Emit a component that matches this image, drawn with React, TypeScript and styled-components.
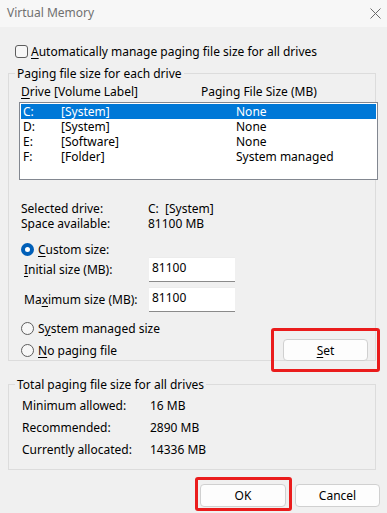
import React from 'react'
import styled, { createGlobalStyle } from 'styled-components'

const GlobalStyle = createGlobalStyle`
  html, body {
    margin: 0;
    padding: 0;
    background: #f0f0f0;
  }
  body {
    font-family: "Segoe UI", "Noto Sans", sans-serif;
    font-size: 12px;
    color: #000;
  }
`

const drives = [
  { letter: 'C:', label: '[System]', size: 'None' },
  { letter: 'D:', label: '[System]', size: 'None' },
  { letter: 'E:', label: '[Software]', size: 'None' },
  { letter: 'F:', label: '[Folder]', size: 'System managed' },
]

const totals = [
  { label: 'Minimum allowed:', value: '16 MB' },
  { label: 'Recommended:', value: '2890 MB' },
  { label: 'Currently allocated:', value: '14336 MB' },
]

const App: React.FC = () => {
  return (
    <>
      <GlobalStyle />
      <Window>
        <TitleBar>
          <span>Virtual Memory</span>
          <CloseIcon width="11" height="11" viewBox="0 0 11 11">
            <path d="M0.5 0.5 L10.5 10.5 M10.5 0.5 L0.5 10.5" stroke="#6b6b6b" strokeWidth="1" fill="none" />
          </CloseIcon>
        </TitleBar>

        <Body>
          <CheckRow>
            <CheckBox />
            <span>
              <Key>A</Key>utomatically manage paging file size for all drives
            </span>
          </CheckRow>

          <Group $gap={7}>
            <Legend>Paging file size for each drive</Legend>
            <ListHeader>
              <span>
                <Key>D</Key>rive
              </span>
              <span>[Volume Label]</span>
              <span>Paging File Size (MB)</span>
            </ListHeader>
            <ListBox>
              {drives.map((d, i) => (
                <DriveRow key={d.letter} $selected={i === 0}>
                  <span>{d.letter}</span>
                  <span>{d.label}</span>
                  <span>{d.size}</span>
                </DriveRow>
              ))}
            </ListBox>

            <InfoBlock>
              <InfoRow>
                <span>Selected drive:</span>
                <span>C:&nbsp;&nbsp;[System]</span>
              </InfoRow>
              <InfoRow>
                <span>Space available:</span>
                <span>81100 MB</span>
              </InfoRow>
            </InfoBlock>

            <RadioRow $top={11}>
              <Radio $checked />
              <span>
                <Key>C</Key>ustom size:
              </span>
            </RadioRow>
            <SizeRow $top={0}>
              <span>
                <Key>I</Key>nitial size (MB):
              </span>
              <SizeInput defaultValue="81100" />
            </SizeRow>
            <SizeRow $top={5}>
              <span>
                Ma<Key>x</Key>imum size (MB):
              </span>
              <SizeInput defaultValue="81100" />
            </SizeRow>

            <BottomArea>
              <div>
                <RadioRow $top={0}>
                  <Radio />
                  <span>
                    S<Key>y</Key>stem managed size
                  </span>
                </RadioRow>
                <RadioRow $top={7}>
                  <Radio />
                  <span>
                    <Key>N</Key>o paging file
                  </span>
                </RadioRow>
              </div>
              <SetButton>
                <Key>S</Key>et
              </SetButton>
            </BottomArea>
          </Group>

          <Group $gap={16.5}>
            <Legend>Total paging file size for all drives</Legend>
            <TotalsList>
              {totals.map((t) => (
                <TotalRow key={t.label}>
                  <span>{t.label}</span>
                  <span>{t.value}</span>
                </TotalRow>
              ))}
            </TotalsList>
          </Group>

          <Footer>
            <OkButton>OK</OkButton>
            <DialogButton>Cancel</DialogButton>
          </Footer>
        </Body>
      </Window>
    </>
  )
}

const Window = styled.div`
  width: 387px;
  height: 513px;
  background: #f0f0f0;
  display: flex;
  flex-direction: column;
  overflow: hidden;
`

const TitleBar = styled.div`
  height: 27px;
  flex: none;
  box-sizing: border-box;
  padding: 0 6px 2px 7px;
  background: #f7f7f7;
  color: #707070;
  display: flex;
  align-items: center;
  justify-content: space-between;
`

const CloseIcon = styled.svg`
  display: block;
  margin-top: 2px;
`

const Body = styled.div`
  padding: 0 7px 0 8px;
  display: flex;
  flex-direction: column;
`

const Key = styled.span`
  text-decoration: underline;
  text-underline-offset: 2px;
`

const CheckRow = styled.div`
  margin-top: 16.5px;
  margin-left: 7px;
  height: 15px;
  line-height: 15px;
  display: flex;
  align-items: center;
  gap: 3px;
`

const CheckBox = styled.span`
  width: 13px;
  height: 13px;
  box-sizing: border-box;
  border: 1px solid #5d5d5d;
  border-radius: 3px;
  background: #f7f7f7;
`

const Group = styled.fieldset<{ $gap: number }>`
  margin: ${(p) => p.$gap}px 4px 0 0;
  padding: 0;
  min-inline-size: 0;
  border: 1px solid #dcdcdc;
  display: flex;
  flex-direction: column;
`

const Legend = styled.legend`
  margin-left: 6px;
  padding: 0 2px;
  line-height: 15px;
  height: 15px;
`

const ListHeader = styled.div`
  margin: 3px 0 0 12px;
  height: 15px;
  line-height: 15px;
  display: grid;
  grid-template-columns: 33px 147px 1fr;
`

const ListBox = styled.div`
  margin: 3.5px -3px 0 10px;
  height: 78px;
  box-sizing: border-box;
  border: 1px solid #828790;
  background: #fff;
  padding: 1px;
`

const DriveRow = styled.div<{ $selected?: boolean }>`
  height: 15px;
  line-height: 15px;
  padding-left: 2px;
  display: grid;
  grid-template-columns: 38px 175px 1fr;
  background: ${(p) => (p.$selected ? '#0078d7' : 'transparent')};
  color: ${(p) => (p.$selected ? '#fff' : '#000')};
`

const InfoBlock = styled.div`
  margin: 20.5px 0 0 12px;
`

const InfoRow = styled.div`
  height: 15px;
  line-height: 15px;
  display: grid;
  grid-template-columns: 127px 1fr;
`

const RadioRow = styled.div<{ $top: number }>`
  margin: ${(p) => p.$top}px 0 0 12px;
  height: 15px;
  line-height: 15px;
  display: flex;
  align-items: center;
  gap: 4px;
`

const Radio = styled.span<{ $checked?: boolean }>`
  width: 13px;
  height: 13px;
  box-sizing: border-box;
  border-radius: 50%;
  border: ${(p) => (p.$checked ? '4px solid #005fb8' : '1px solid #5d5d5d')};
  background: ${(p) => (p.$checked ? '#fff' : '#f7f7f7')};
`

const SizeRow = styled.div<{ $top: number }>`
  margin: ${(p) => p.$top}px 0 0 15px;
  height: 25px;
  display: grid;
  grid-template-columns: 125px 86px;
  align-items: center;
`

const SizeInput = styled.input`
  width: 86px;
  height: 25px;
  box-sizing: border-box;
  border: none;
  border-top: 1px solid #ececec;
  border-bottom: 1px solid #8a8a8a;
  background: #fff;
  padding: 0 0 4px 3px;
  font: inherit;
  color: #000;
  outline: none;
`

const BottomArea = styled.div`
  margin-top: 9.5px;
  padding-bottom: 1.5px;
  display: flex;
  justify-content: space-between;
  align-items: flex-end;
`

const PushButton = styled.button`
  position: relative;
  height: 22px;
  box-sizing: border-box;
  border: 1px solid #d0d0d0;
  border-radius: 4px;
  background: #fdfdfd;
  font: inherit;
  color: #000;
  padding: 0;
`

// red annotation frame drawn over the highlighted buttons
const SetButton = styled(PushButton)`
  width: 85px;
  margin: 0 7px -3px 0;
  &::after {
    content: '';
    position: absolute;
    top: -12px;
    right: -13px;
    bottom: -12px;
    left: -13px;
    border: 3px solid #ea1c1c;
    border-radius: 3px;
  }
`

const DialogButton = styled(PushButton)`
  width: 85px;
  height: 23px;
`

const OkButton = styled(DialogButton)`
  width: 86px;
  &::after {
    content: '';
    position: absolute;
    top: -8px;
    right: -7px;
    bottom: -5px;
    left: -6px;
    border: 3px solid #ea1c1c;
    border-radius: 3px;
  }
`

const TotalsList = styled.div`
  margin: 2.5px 0 8px 13px;
`

const TotalRow = styled.div`
  height: 22px;
  line-height: 22px;
  display: grid;
  grid-template-columns: 128px 1fr;
`

const Footer = styled.div`
  margin-top: 14px;
  display: flex;
  justify-content: flex-end;
  gap: 9px;
`

export default App
